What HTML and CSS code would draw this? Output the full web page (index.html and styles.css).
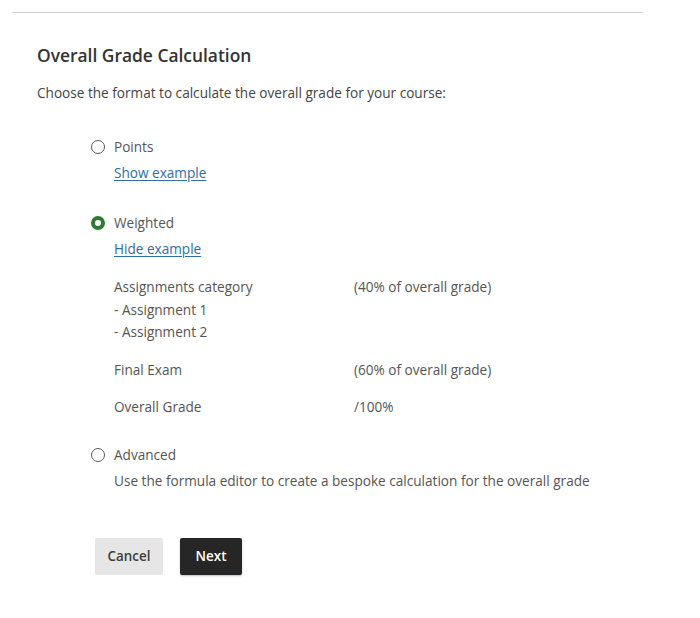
FILE: index.html
```html
<!DOCTYPE html>
<html lang="en">
<head>
<meta charset="utf-8">
<title>Overall Grade Calculation</title>
<link rel="stylesheet" href="styles.css">
</head>
<body>
<div class="rule"></div>
<main class="panel">
  <h2 class="title">Overall Grade Calculation</h2>
  <p class="intro">Choose the format to calculate the overall grade for your course:</p>

  <div class="options">
    <div class="option">
      <label class="radio-row">
        <span class="radio"></span>
        <span class="radio-label">Points</span>
      </label>
      <div class="option-body">
        <a href="#" class="link">Show example</a>
      </div>
    </div>

    <div class="option option-weighted">
      <label class="radio-row">
        <span class="radio checked"></span>
        <span class="radio-label">Weighted</span>
      </label>
      <div class="option-body">
        <a href="#" class="link">Hide example</a>
        <div class="example">
          <div class="cell">Assignments category<br>- Assignment 1<br>- Assignment 2</div>
          <div class="cell">(40% of overall grade)</div>
          <div class="cell">Final Exam</div>
          <div class="cell">(60% of overall grade)</div>
          <div class="cell">Overall Grade</div>
          <div class="cell">/100%</div>
        </div>
      </div>
    </div>

    <div class="option option-advanced">
      <label class="radio-row">
        <span class="radio"></span>
        <span class="radio-label">Advanced</span>
      </label>
      <div class="option-body">
        <p class="desc">Use the formula editor to create a bespoke calculation for the overall grade</p>
      </div>
    </div>
  </div>

  <div class="actions">
    <button class="btn btn-secondary">Cancel</button>
    <button class="btn btn-primary">Next</button>
  </div>
</main>
</body>
</html>
```

FILE: styles.css
```css
* { box-sizing: border-box; }

html, body {
  margin: 0;
  padding: 0;
  background: #ffffff;
}

body {
  font-family: "Open Sans", "Noto Sans", sans-serif;
  font-size: 13.6px;
  color: #555555;
  width: 700px;
  height: 618px;
  overflow: hidden;
}

.rule {
  height: 1px;
  background: #d2d2d2;
  margin: 12px 57px 0 12px;
}

.panel {
  padding-left: 37px;
}

.title {
  margin: 30px 0 0;
  font-size: 17.4px;
  line-height: 24px;
  font-weight: 600;
  color: #333333;
}

.intro {
  margin: 16px 0 0;
  line-height: 20px;
  color: #444444;
}

.options {
  padding-left: 54px;
  margin-top: 34px;
}

.option-weighted { margin-top: 30px; }
.option-advanced { margin-top: 26px; }

.radio-row {
  display: flex;
  align-items: center;
  gap: 9px;
  line-height: 20px;
}

.radio {
  width: 14px;
  height: 14px;
  border-radius: 50%;
  border: 1.5px solid #5a5a5a;
  background: #fff;
  flex: none;
}

.radio.checked {
  border: 4px solid #2f7a33;
}

.radio-label {
  color: #555555;
}

.option-body {
  padding-left: 23px;
  margin-top: 6px;
}

.link {
  display: inline-block;
  line-height: 20px;
  color: #2d6ea8;
  text-decoration: underline;
  text-underline-offset: 2px;
}

.example {
  display: grid;
  grid-template-columns: 240px auto;
  row-gap: 15px;
  margin-top: 17px;
  line-height: 22.5px;
}

.cell {
  color: #555555;
}

.desc {
  margin: 0;
  line-height: 20px;
  color: #555555;
}

.actions {
  display: flex;
  gap: 17px;
  margin-top: 47px;
  padding-left: 58px;
}

.btn {
  font-family: "Open Sans", "Noto Sans", sans-serif;
  font-size: 13.4px;
  font-weight: 600;
  height: 37px;
  border: none;
  border-radius: 2px;
  padding: 0;
  cursor: pointer;
}

.btn-secondary {
  width: 68px;
  background: #e6e6e6;
  color: #3c3c3c;
}

.btn-primary {
  width: 62px;
  background: #262626;
  color: #ffffff;
  box-shadow: 0 1px 2px rgba(0,0,0,0.25);
}
```
